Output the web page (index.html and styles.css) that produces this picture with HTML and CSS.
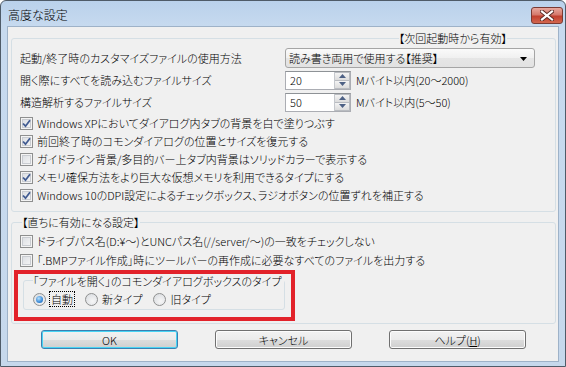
FILE: index.html
```html
<!DOCTYPE html>
<html lang="ja">
<head>
<meta charset="utf-8">
<title>高度な設定</title>
<link rel="stylesheet" href="styles.css">
</head>
<body>
<div class="window">
  <div class="titlebar">
    <span class="title">高度な設定</span>
    <div class="close">
      <svg width="14" height="11" viewBox="0 0 14 11"><path d="M2 1.5 L12 9.5 M12 1.5 L2 9.5" stroke="#5a2a24" stroke-width="4" stroke-linecap="square"/><path d="M2 1.5 L12 9.5 M12 1.5 L2 9.5" stroke="#fff" stroke-width="2.2" stroke-linecap="square"/></svg>
    </div>
  </div>
  <div class="client">
    <div class="group g1">
      <div class="caption caption-right">【次回起動時から有効】</div>
      <div class="field">
        <span class="label">起動/終了時のカスタマイズファイルの使用方法</span>
        <div class="combo"><span>読み書き両用で使用する【推奨】</span>
          <svg class="arrow" width="7" height="4" viewBox="0 0 7 4"><path d="M0 0 H7 L3.5 4 Z" fill="#000"/></svg>
        </div>
      </div>
      <div class="field">
        <span class="label">開く際にすべてを読み込むファイルサイズ</span>
        <div class="edit"><span class="value">20</span>
          <div class="spin"><span class="sb"><svg width="7" height="4" viewBox="0 0 7 4"><path d="M0 4 L3.5 0 L7 4 Z" fill="#4d6185"/></svg></span><span class="sb"><svg width="7" height="4" viewBox="0 0 7 4"><path d="M0 0 H7 L3.5 4 Z" fill="#4d6185"/></svg></span></div>
        </div>
        <span class="unit">Mバイト以内(20〜2000)</span>
      </div>
      <div class="field">
        <span class="label">構造解析するファイルサイズ</span>
        <div class="edit"><span class="value">50</span>
          <div class="spin"><span class="sb"><svg width="7" height="4" viewBox="0 0 7 4"><path d="M0 4 L3.5 0 L7 4 Z" fill="#4d6185"/></svg></span><span class="sb"><svg width="7" height="4" viewBox="0 0 7 4"><path d="M0 0 H7 L3.5 4 Z" fill="#4d6185"/></svg></span></div>
        </div>
        <span class="unit">Mバイト以内(5〜50)</span>
      </div>
      <div class="checks">
        <div class="check"><span class="box on"></span><span>Windows XPにおいてダイアログ内タブの背景を白で塗りつぶす</span></div>
        <div class="check"><span class="box on"></span><span>前回終了時のコモンダイアログの位置とサイズを復元する</span></div>
        <div class="check"><span class="box"></span><span>ガイドライン背景/多目的バー上タブ内背景はソリッドカラーで表示する</span></div>
        <div class="check"><span class="box on"></span><span>メモリ確保方法をより巨大な仮想メモリを利用できるタイプにする</span></div>
        <div class="check"><span class="box on"></span><span>Windows 10のDPI設定によるチェックボックス、ラジオボタンの位置ずれを補正する</span></div>
      </div>
    </div>
    <div class="group g2">
      <div class="caption caption-left">【直ちに有効になる設定】</div>
      <div class="checks checks2">
        <div class="check"><span class="box"></span><span>ドライブパス名(D:¥〜)とUNCパス名(//server/〜)の一致をチェックしない</span></div>
        <div class="check"><span class="box"></span><span>「.BMPファイル作成」時にツールバーの再作成に必要なすべてのファイルを出力する</span></div>
      </div>
      <div class="highlight">
        <div class="group g3">
          <div class="caption caption-plain">「ファイルを開く」のコモンダイアログボックスのタイプ</div>
          <div class="radios">
            <div class="radio"><span class="dot on"></span><span class="focus">自動</span></div>
            <div class="radio"><span class="dot"></span><span>新タイプ</span></div>
            <div class="radio"><span class="dot"></span><span>旧タイプ</span></div>
          </div>
        </div>
      </div>
    </div>
    <div class="buttons">
      <div class="btn default">OK</div>
      <div class="btn">キャンセル</div>
      <div class="btn">ヘルプ(<u>H</u>)</div>
    </div>
  </div>
</div>
</body>
</html>
```
FILE: styles.css
```css
* { box-sizing: border-box; }
html, body { margin: 0; padding: 0; }
body {
  width: 566px;
  height: 367px;
  overflow: hidden;
  background: #fff;
  font-family: "Noto Sans CJK JP", "Noto Sans", sans-serif;
  font-size: 11px;
  font-weight: 300;
  font-feature-settings: "palt";
  color: #000;
}
.window {
  width: 566px;
  height: 367px;
  border: 1px solid #4f5b68;
  border-radius: 6px 6px 0 0;
  background: linear-gradient(#bad1eb, #c7daef 26px, #c6d8ec);
  display: flex;
  flex-direction: column;
}
.titlebar {
  height: 25px;
  display: flex;
  align-items: center;
  justify-content: space-between;
  padding: 0 2px 0 7px;
}
.title { font-size: 12px; line-height: 14px; margin-top: 2px; }
.close {
  width: 32px;
  height: 17px;
  margin-top: 3px;
  border: 1px solid #7a3a33;
  border-radius: 3px;
  background: linear-gradient(#e8a89e, #d5796c 45%, #c2402f 55%, #d2664e);
  display: flex;
  align-items: center;
  justify-content: center;
}
.client {
  flex: 1;
  margin: 0 6px 4px 6px;
  border: 1px solid #9eb2c8;
  background: #f0f0f0;
  padding: 11px 2px 0 3px;
  display: flex;
  flex-direction: column;
}
.group {
  border: 1px solid #d5dfe5;
  border-radius: 3px;
  display: flex;
  flex-direction: column;
}
.caption {
  background: #f0f0f0;
  line-height: 14px;
  height: 14px;
  margin-top: -8px;
  white-space: nowrap;
  width: fit-content;
}
.caption-right { margin-left: auto; margin-right: 48px; }
.caption-left { margin-left: 2px; }
.caption-plain { margin-left: 1px; line-height: 12px; height: 12px; margin-top: -6px; padding-right: 2px; }
.g1 { padding: 0 0 7px 8px; }
.field {
  display: flex;
  align-items: center;
  height: 20px;
  margin-top: 2px;
}
.g1 .caption + .field { margin-top: 3px; }
.label { width: 265px; white-space: nowrap; line-height: 14px; }
.combo {
  width: 250px;
  height: 20px;
  border: 1px solid #a5a5a5;
  border-radius: 3px;
  background: linear-gradient(#fafafa, #f0f0f0 50%, #e6e6e6 51%, #e2e2e2);
  display: flex;
  align-items: center;
  justify-content: space-between;
  padding: 0 7px 0 3px;
  line-height: 14px;
}
.arrow { margin-top: 1px; }
.edit {
  width: 66px;
  height: 19px;
  border: 1px solid #abadb3;
  border-top-color: #8e9296;
  background: #fff;
  display: flex;
  align-items: stretch;
  justify-content: space-between;
  padding-left: 4px;
}
.value { line-height: 17px; }
.spin {
  width: 16px;
  display: flex;
  flex-direction: column;
  border-left: 1px solid #c5c8cd;
}
.sb {
  flex: 1;
  display: flex;
  align-items: center;
  justify-content: center;
  background: linear-gradient(#f4f4f4, #dcdcdc);
  border: 1px solid #b9bcc1;
  border-left: 0;
}
.sb + .sb { border-top: 0; }
.unit { margin-left: 5px; white-space: nowrap; line-height: 14px; }
.checks { display: flex; flex-direction: column; margin-top: 2px; }
.check {
  height: 18px;
  display: flex;
  align-items: center;
  white-space: nowrap;
  line-height: 14px;
}
.box {
  width: 13px;
  height: 13px;
  border: 1px solid #8e8f8f;
  background: #fff;
  margin-right: 4px;
  flex: none;
  position: relative;
  box-shadow: inset 0 0 0 1px #f4f4f4, inset 0 0 0 2px #c9ccd1;
  background-image: linear-gradient(135deg, #d8dbe0, #f8f8f8);
  background-clip: content-box;
  padding: 2px;
}
.box.on::after {
  content: "";
  position: absolute;
  left: 1px;
  top: 1px;
  width: 9px;
  height: 9px;
  background: url("data:image/svg+xml;utf8,<svg xmlns='http://www.w3.org/2000/svg' width='9' height='9' viewBox='0 0 9 9'><path d='M1 4.5 L3.5 7.2 L8 1.2' fill='none' stroke='%23425c92' stroke-width='1.8'/></svg>") no-repeat;
}
.g2 { margin-top: 10px; padding: 0 0 1px 8px; }
.checks2 { margin-top: 3px; gap: 1px; }
.highlight {
  width: 281px;
  margin: 1px 0 1px -6px;
  border: 4px solid #e2222a;
  padding: 6px 6px 7px 5px;
}
.g3 { padding: 0 0 1px 8px; }
.radios { display: flex; align-items: center; height: 18px; margin-top: 3px; }
.radio { display: flex; align-items: center; margin-right: 11px; white-space: nowrap; line-height: 14px; }
.dot {
  width: 13px;
  height: 13px;
  border-radius: 50%;
  border: 1px solid #8e8f8f;
  background: radial-gradient(circle at 60% 65%, #f6f6f6, #d6d9de);
  margin-right: 4px;
  display: flex;
  align-items: center;
  justify-content: center;
}
.dot.on::after {
  content: "";
  width: 7px;
  height: 7px;
  border-radius: 50%;
  background: radial-gradient(circle at 40% 35%, #b7e0fb, #3a8ad7 60%, #1b5aae);
}
.focus { outline: 1px dotted #000; outline-offset: 0; padding: 0 1px; }
.g3 .radio:first-child { margin-left: 1px; }
.buttons {
  display: flex;
  justify-content: center;
  gap: 37px;
  margin-top: 6px;
}
.btn {
  width: 137px;
  height: 19px;
  border: 1px solid #707070;
  border-radius: 3px;
  background: linear-gradient(#f2f2f2, #ebebeb 50%, #dddddd 51%, #cfcfcf);
  display: flex;
  align-items: center;
  justify-content: center;
  line-height: 14px;
  box-shadow: inset 0 0 0 1px #fcfcfc;
}
.btn.default { border-color: #3c7fb1; box-shadow: inset 0 0 0 1px #48d4f4; }
u { text-decoration: underline; text-underline-offset: 1px; }
```
